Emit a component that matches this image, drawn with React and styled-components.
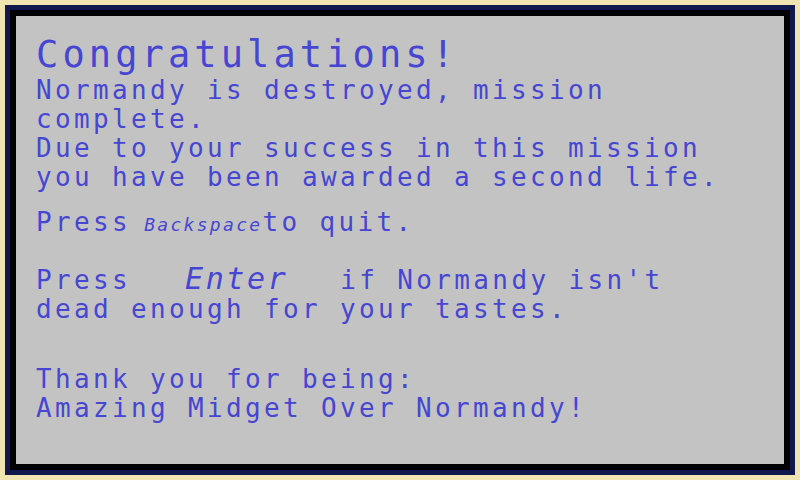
import styled, { createGlobalStyle } from 'styled-components';

const GlobalStyle = createGlobalStyle`
  html, body {
    margin: 0;
    padding: 0;
    background: #f0e4b0;
  }
`;

const App = () => {
  return (
    <>
      <GlobalStyle />
      <StyledScreen>
        <StyledFrame>
          <StyledPanel>
            <StyledTitle>Congratulations!</StyledTitle>
            <StyledText>
              Normandy is destroyed, mission
              <br />
              complete.
              <br />
              Due to your success in this mission
              <br />
              you have been awarded a second life.
            </StyledText>
            <StyledText $gap={16}>
              Press<SmallKey> Backspace</SmallKey>to quit.
            </StyledText>
            <StyledText $gap={29}>
              Press <BigKey>Enter</BigKey> if Normandy isn't
              <br />
              dead enough for your tastes.
            </StyledText>
            <StyledText $gap={41}>
              Thank you for being:
              <br />
              Amazing Midget Over Normandy!
            </StyledText>
          </StyledPanel>
        </StyledFrame>
      </StyledScreen>
    </>
  );
};

const StyledScreen = styled.div`
  width: 800px;
  height: 480px;
  box-sizing: border-box;
  padding: 5px;
  background: #f0e4b0;
  display: flex;
`;

const StyledFrame = styled.div`
  flex: 1;
  display: flex;
  border: 5px solid #10184e;
  background: #000;
  padding: 6px;
`;

const StyledPanel = styled.div`
  flex: 1;
  background: #c3c3c3;
  padding: 19px 20px 0;
  color: #4646d2;
  font-family: 'DejaVu Sans Mono', 'Liberation Mono', monospace;
  overflow: hidden;
`;

const StyledTitle = styled.h1`
  margin: 0;
  font-size: 37px;
  line-height: 40px;
  font-weight: normal;
  letter-spacing: 4.1px;
`;

const StyledText = styled.p`
  margin: ${(p) => p.$gap || 1}px 0 0;
  font-size: 26px;
  line-height: 29px;
  letter-spacing: 3.35px;
  white-space: nowrap;
`;

const SmallKey = styled.span`
  font-size: 18px;
  line-height: 0;
  font-style: italic;
  letter-spacing: 2.3px;
`;

const BigKey = styled.span`
  font-size: 30px;
  line-height: 0;
  font-style: italic;
  letter-spacing: 2.6px;
  margin: 0 33px 0 35px;
`;

export default App;
